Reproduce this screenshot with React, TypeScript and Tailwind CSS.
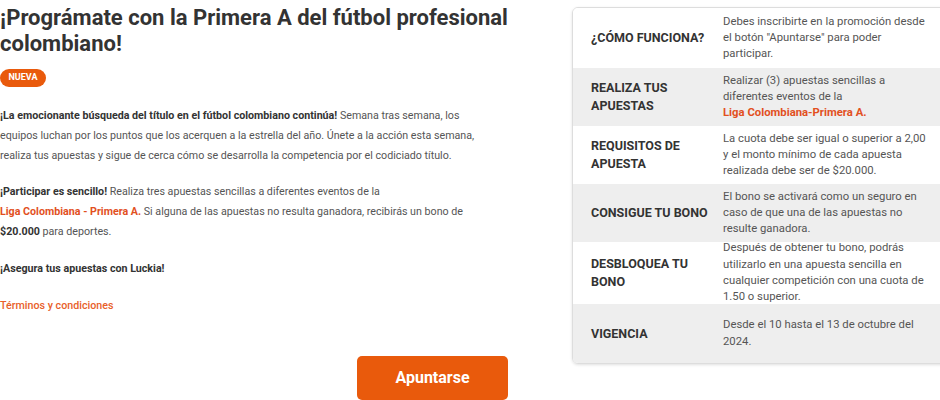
import React from "react";

const rows: { label: string; lines: React.ReactNode[]; h: string; bg: string }[] = [
  {
    label: "¿CÓMO FUNCIONA?",
    lines: ["Debes inscribirte en la promoción desde", 'el botón "Apuntarse" para poder', "participar."],
    h: "h-[60px]",
    bg: "bg-white",
  },
  {
    label: "REALIZA TUS APUESTAS",
    lines: [
      "Realizar (3) apuestas sencillas a",
      "diferentes eventos de la",
      <span className="font-bold text-[#e2501e]">Liga Colombiana-Primera A.</span>,
    ],
    h: "h-[58px]",
    bg: "bg-[#eeeeee]",
  },
  {
    label: "REQUISITOS DE APUESTA",
    lines: ["La cuota debe ser igual o superior a 2,00", "y el monto mínimo de cada apuesta", "realizada debe ser de $20.000."],
    h: "h-[58px]",
    bg: "bg-white",
  },
  {
    label: "CONSIGUE TU BONO",
    lines: ["El bono se activará como un seguro en", "caso de que una de las apuestas no", "resulte ganadora."],
    h: "h-[58px]",
    bg: "bg-[#eeeeee]",
  },
  {
    label: "DESBLOQUEA TU BONO",
    lines: [
      "Después de obtener tu bono, podrás",
      "utilizarlo en una apuesta sencilla en",
      "cualquier competición con una cuota de",
      "1.50 o superior.",
    ],
    h: "h-[62px]",
    bg: "bg-white",
  },
  {
    label: "VIGENCIA",
    lines: ["Desde el 10 hasta el 13 de octubre del", "2024."],
    h: "h-[59px]",
    bg: "bg-[#eeeeee]",
  },
];

export default function App() {
  return (
    <div
      className="w-[940px] h-[400px] overflow-hidden bg-white flex"
      style={{ fontFamily: "Roboto, 'Liberation Sans', sans-serif" }}
    >
      <div className="w-[540px] shrink-0 flex flex-col">
        <h1 className="text-[22px] leading-[26px] font-bold text-[#333333] mt-[5px]">
          ¡Prográmate con la Primera A del fútbol profesional colombiano!
        </h1>
        <div className="mt-[12px] w-[46px] h-[19px] rounded-full bg-[#e95a0c] text-white text-[9px] font-bold flex items-center justify-center">
          NUEVA
        </div>
        <div className="mt-[19px] text-[10.7px] leading-[20px] text-[#555555] whitespace-nowrap">
          <p>
            <span className="font-bold text-[#333333]">
              ¡La emocionante búsqueda del título en el fútbol colombiano continúa!
            </span>{" "}
            Semana tras semana, los
            <br />
            equipos luchan por los puntos que los acerquen a la estrella del año. Únete a la acción esta semana,
            <br />
            realiza tus apuestas y sigue de cerca cómo se desarrolla la competencia por el codiciado título.
          </p>
          <p className="mt-[16px]">
            <span className="font-bold text-[#333333]">¡Participar es sencillo!</span> Realiza tres apuestas sencillas a
            diferentes eventos de la
            <br />
            <span className="font-bold text-[#e2501e]">Liga Colombiana - Primera A.</span> Si alguna de las apuestas no
            resulta ganadora, recibirás un bono de
            <br />
            <span className="font-bold text-[#333333]">$20.000</span> para deportes.
          </p>
          <p className="mt-[17px] font-bold text-[#333333]">¡Asegura tus apuestas con Luckia!</p>
          <p className="mt-[17px] font-medium text-[#e8602a]">Términos y condiciones</p>
        </div>
        <div className="mt-[40px] ml-[357px] w-[151px] h-[44px] shrink-0 rounded-[5px] bg-[#e95a0c] text-white text-[16px] font-bold flex items-center justify-center">
          Apuntarse
        </div>
      </div>
      <div className="ml-[32px] mt-[7px] w-[390px] shrink-0 self-start">
        <div className="rounded-[6px] border border-[#dddddd] overflow-hidden shadow-[0_1px_3px_rgba(0,0,0,0.12)]">
          {rows.map((r, i) => (
            <div key={i} className={`flex items-center ${r.h} ${r.bg}`}>
              <div className="w-[150px] shrink-0 pl-[18px] pr-[8px] text-[12.5px] leading-[18px] font-bold text-[#333333]">
                {r.label}
              </div>
              <div className="flex flex-col whitespace-nowrap text-[11.3px] leading-[16.3px] text-[#555555]">
                {r.lines.map((l, j) => (
                  <div key={j}>{l}</div>
                ))}
              </div>
            </div>
          ))}
        </div>
      </div>
    </div>
  );
}
